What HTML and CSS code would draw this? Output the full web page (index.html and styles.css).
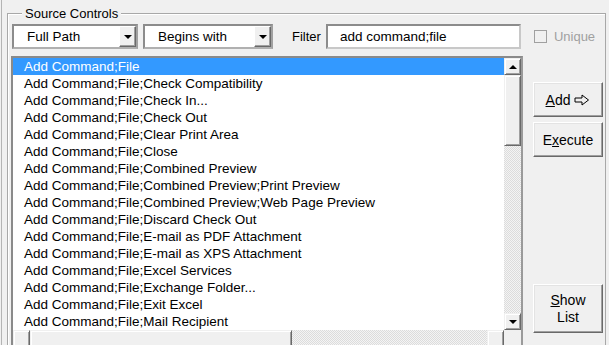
FILE: index.html
```html
<!DOCTYPE html>
<html lang="en">
<head>
    <meta charset="UTF-8">
    <title>Source Controls</title>
    <link rel="stylesheet" href="styles.css">
</head>
<body>
    <div class="window">
        <div class="frame">
            <span class="legend">Source Controls</span>
            <div class="toolbar">
                <div class="combo combo-path">
                    <span class="combo-text">Full Path</span>
                    <span class="drop"></span>
                </div>
                <div class="combo combo-match">
                    <span class="combo-text">Begins with</span>
                    <span class="drop"></span>
                </div>
                <span class="filter-label">Filter</span>
                <div class="textbox">add command;file</div>
                <span class="check"></span>
                <span class="check-label">Unique</span>
            </div>
            <div class="main">
                <div class="listbox">
                    <div class="list-body">
                        <ul class="items">
                            <li class="selected">Add Command;File</li>
                            <li>Add Command;File;Check Compatibility</li>
                            <li>Add Command;File;Check In...</li>
                            <li>Add Command;File;Check Out</li>
                            <li>Add Command;File;Clear Print Area</li>
                            <li>Add Command;File;Close</li>
                            <li>Add Command;File;Combined Preview</li>
                            <li>Add Command;File;Combined Preview;Print Preview</li>
                            <li>Add Command;File;Combined Preview;Web Page Preview</li>
                            <li>Add Command;File;Discard Check Out</li>
                            <li>Add Command;File;E-mail as PDF Attachment</li>
                            <li>Add Command;File;E-mail as XPS Attachment</li>
                            <li>Add Command;File;Excel Services</li>
                            <li>Add Command;File;Exchange Folder...</li>
                            <li>Add Command;File;Exit Excel</li>
                            <li>Add Command;File;Mail Recipient</li>
                        </ul>
                        <div class="vscroll">
                            <span class="sbtn up"></span>
                            <span class="thumb vthumb"></span>
                            <span class="track"></span>
                            <span class="sbtn down"></span>
                        </div>
                    </div>
                    <div class="hscroll">
                        <span class="sbtn left"></span>
                        <span class="thumb hthumb"></span>
                        <span class="track"></span>
                        <span class="sbtn right"></span>
                        <span class="corner"></span>
                    </div>
                </div>
                <div class="actions">
                    <button class="button btn-add"><span><u>A</u>dd</span>
                        <svg width="16" height="12" viewBox="0 0 16 12"><path d="M1 4h7V1l6.5 5L8 11V8H1z" fill="none" stroke="#000" stroke-width="1"/></svg>
                    </button>
                    <button class="button btn-exec"><span>E<u>x</u>ecute</span></button>
                    <button class="button btn-show"><span><u>S</u>how<br>List</span></button>
                </div>
            </div>
        </div>
    </div>
</body>
</html>
```

FILE: styles.css
```css
body {
    margin: 0;
    background-color: #f0f0f0;
    font-family: "Liberation Sans", Arial, sans-serif;
    font-size: 13px;
    color: #000;
    overflow: hidden;
}
.window {
    height: 345px;
    margin-left: 1px;
    border-left: 1px solid #b4b4b4;
    padding: 13px 0 0 5px;
    box-sizing: border-box;
    overflow: hidden;
}
.frame {
    position: relative;
    width: 599px;
    height: 340px;
    border: 1px solid #a8a8a8;
    border-bottom: 0;
    box-shadow: inset 1px 1px 0 #fff;
    padding: 10px 0 0 3px;
    box-sizing: border-box;
}
.legend {
    position: absolute;
    top: -8px;
    left: 14px;
    padding: 0 3px;
    line-height: 15px;
    background-color: #f0f0f0;
}
.toolbar {
    display: flex;
    align-items: center;
    height: 25px;
    margin-left: 1px;
}
.combo {
    display: flex;
    align-items: center;
    height: 25px;
    border: 2px solid #8c8c8c;
    border-bottom-color: #b0b0b0;
    border-right-color: #a0a0a0;
    background-color: #fff;
    box-sizing: border-box;
    font-size: 13.5px;
}
.combo-path {
    width: 126px;
    margin-right: 5px;
}
.combo-match {
    width: 130px;
}
.combo-text {
    flex: 1;
    padding-left: 13px;
}
.drop {
    position: relative;
    width: 17px;
    height: 21px;
    box-sizing: border-box;
    background-color: #f0f0f0;
    border: 1px solid;
    border-color: #fff #696969 #696969 #fff;
    box-shadow: inset -1px -1px 0 #a0a0a0;
}
.drop::before {
    content: '';
    position: absolute;
    left: 4px;
    top: 8px;
    border-left: 4px solid transparent;
    border-right: 4px solid transparent;
    border-top: 4px solid #000;
}
.filter-label {
    margin-left: 19px;
    margin-right: 5px;
}
.textbox {
    width: 195px;
    height: 25px;
    line-height: 21px;
    border: 2px solid #8c8c8c;
    border-bottom-color: #c8c8c8;
    border-right-color: #c8c8c8;
    background-color: #fff;
    padding-left: 12px;
    box-sizing: border-box;
    font-size: 13.5px;
}
.check {
    width: 13px;
    height: 13px;
    margin-left: 13px;
    border: 1px solid #a0a0a0;
    box-sizing: border-box;
}
.check-label {
    margin-left: 7px;
    color: #a0a0a0;
}
.main {
    display: flex;
    margin-top: 7px;
}
.listbox {
    width: 512px;
    height: 300px;
    border: 2px solid #8a8a8a;
    border-right-color: #9a9a9a;
    background-color: #fff;
    box-sizing: border-box;
}
.list-body {
    display: flex;
    height: 272px;
}
.items {
    flex: 1;
    margin: 0;
    padding: 0;
    list-style: none;
    font-size: 13.5px;
}
.items li {
    height: 17px;
    line-height: 17px;
    padding-left: 11px;
    white-space: nowrap;
}
.items li.selected {
    background-color: #3399ff;
    color: #fff;
}
.vscroll {
    display: flex;
    flex-direction: column;
    width: 17px;
}
.hscroll {
    display: flex;
    height: 17px;
}
.track {
    flex: 1;
    background: repeating-conic-gradient(#f4f4f4 0 25%, #dcdcdc 0 50%) 0 0 / 2px 2px;
}
.sbtn,
.thumb {
    position: relative;
    flex: none;
    width: 17px;
    height: 17px;
    box-sizing: border-box;
    background-color: #f0f0f0;
    border: 1px solid;
    border-color: #f0f0f0 #696969 #696969 #f0f0f0;
    box-shadow: inset 1px 1px 0 #fff, inset -1px -1px 0 #a0a0a0;
}
.vthumb {
    height: 71px;
}
.hthumb {
    width: 262px;
}
.sbtn::before {
    content: '';
    position: absolute;
    left: 4px;
    top: 6px;
    border-left: 4px solid transparent;
    border-right: 4px solid transparent;
}
.sbtn.up::before {
    border-bottom: 4px solid #000;
}
.sbtn.down::before {
    border-top: 4px solid #000;
}
.sbtn.left::before,
.sbtn.right::before {
    display: none;
}
.corner {
    width: 17px;
    background-color: #f0f0f0;
}
.actions {
    display: flex;
    flex-direction: column;
    width: 70px;
    margin-left: 10px;
}
.button {
    display: flex;
    justify-content: center;
    align-items: center;
    gap: 4px;
    width: 70px;
    padding: 0;
    font-family: inherit;
    font-size: 14px;
    color: #000;
    background-color: #f0f0f0;
    border: 1px solid;
    border-color: #fff #696969 #696969 #fff;
    box-shadow: inset -1px -1px 0 #a0a0a0, inset 1px 1px 0 #e3e3e3;
}
.btn-add {
    height: 35px;
    margin-top: 26px;
}
.btn-exec {
    height: 35px;
    margin-top: 5px;
}
.btn-show {
    height: 49px;
    margin-top: 127px;
    line-height: 17px;
}
```
